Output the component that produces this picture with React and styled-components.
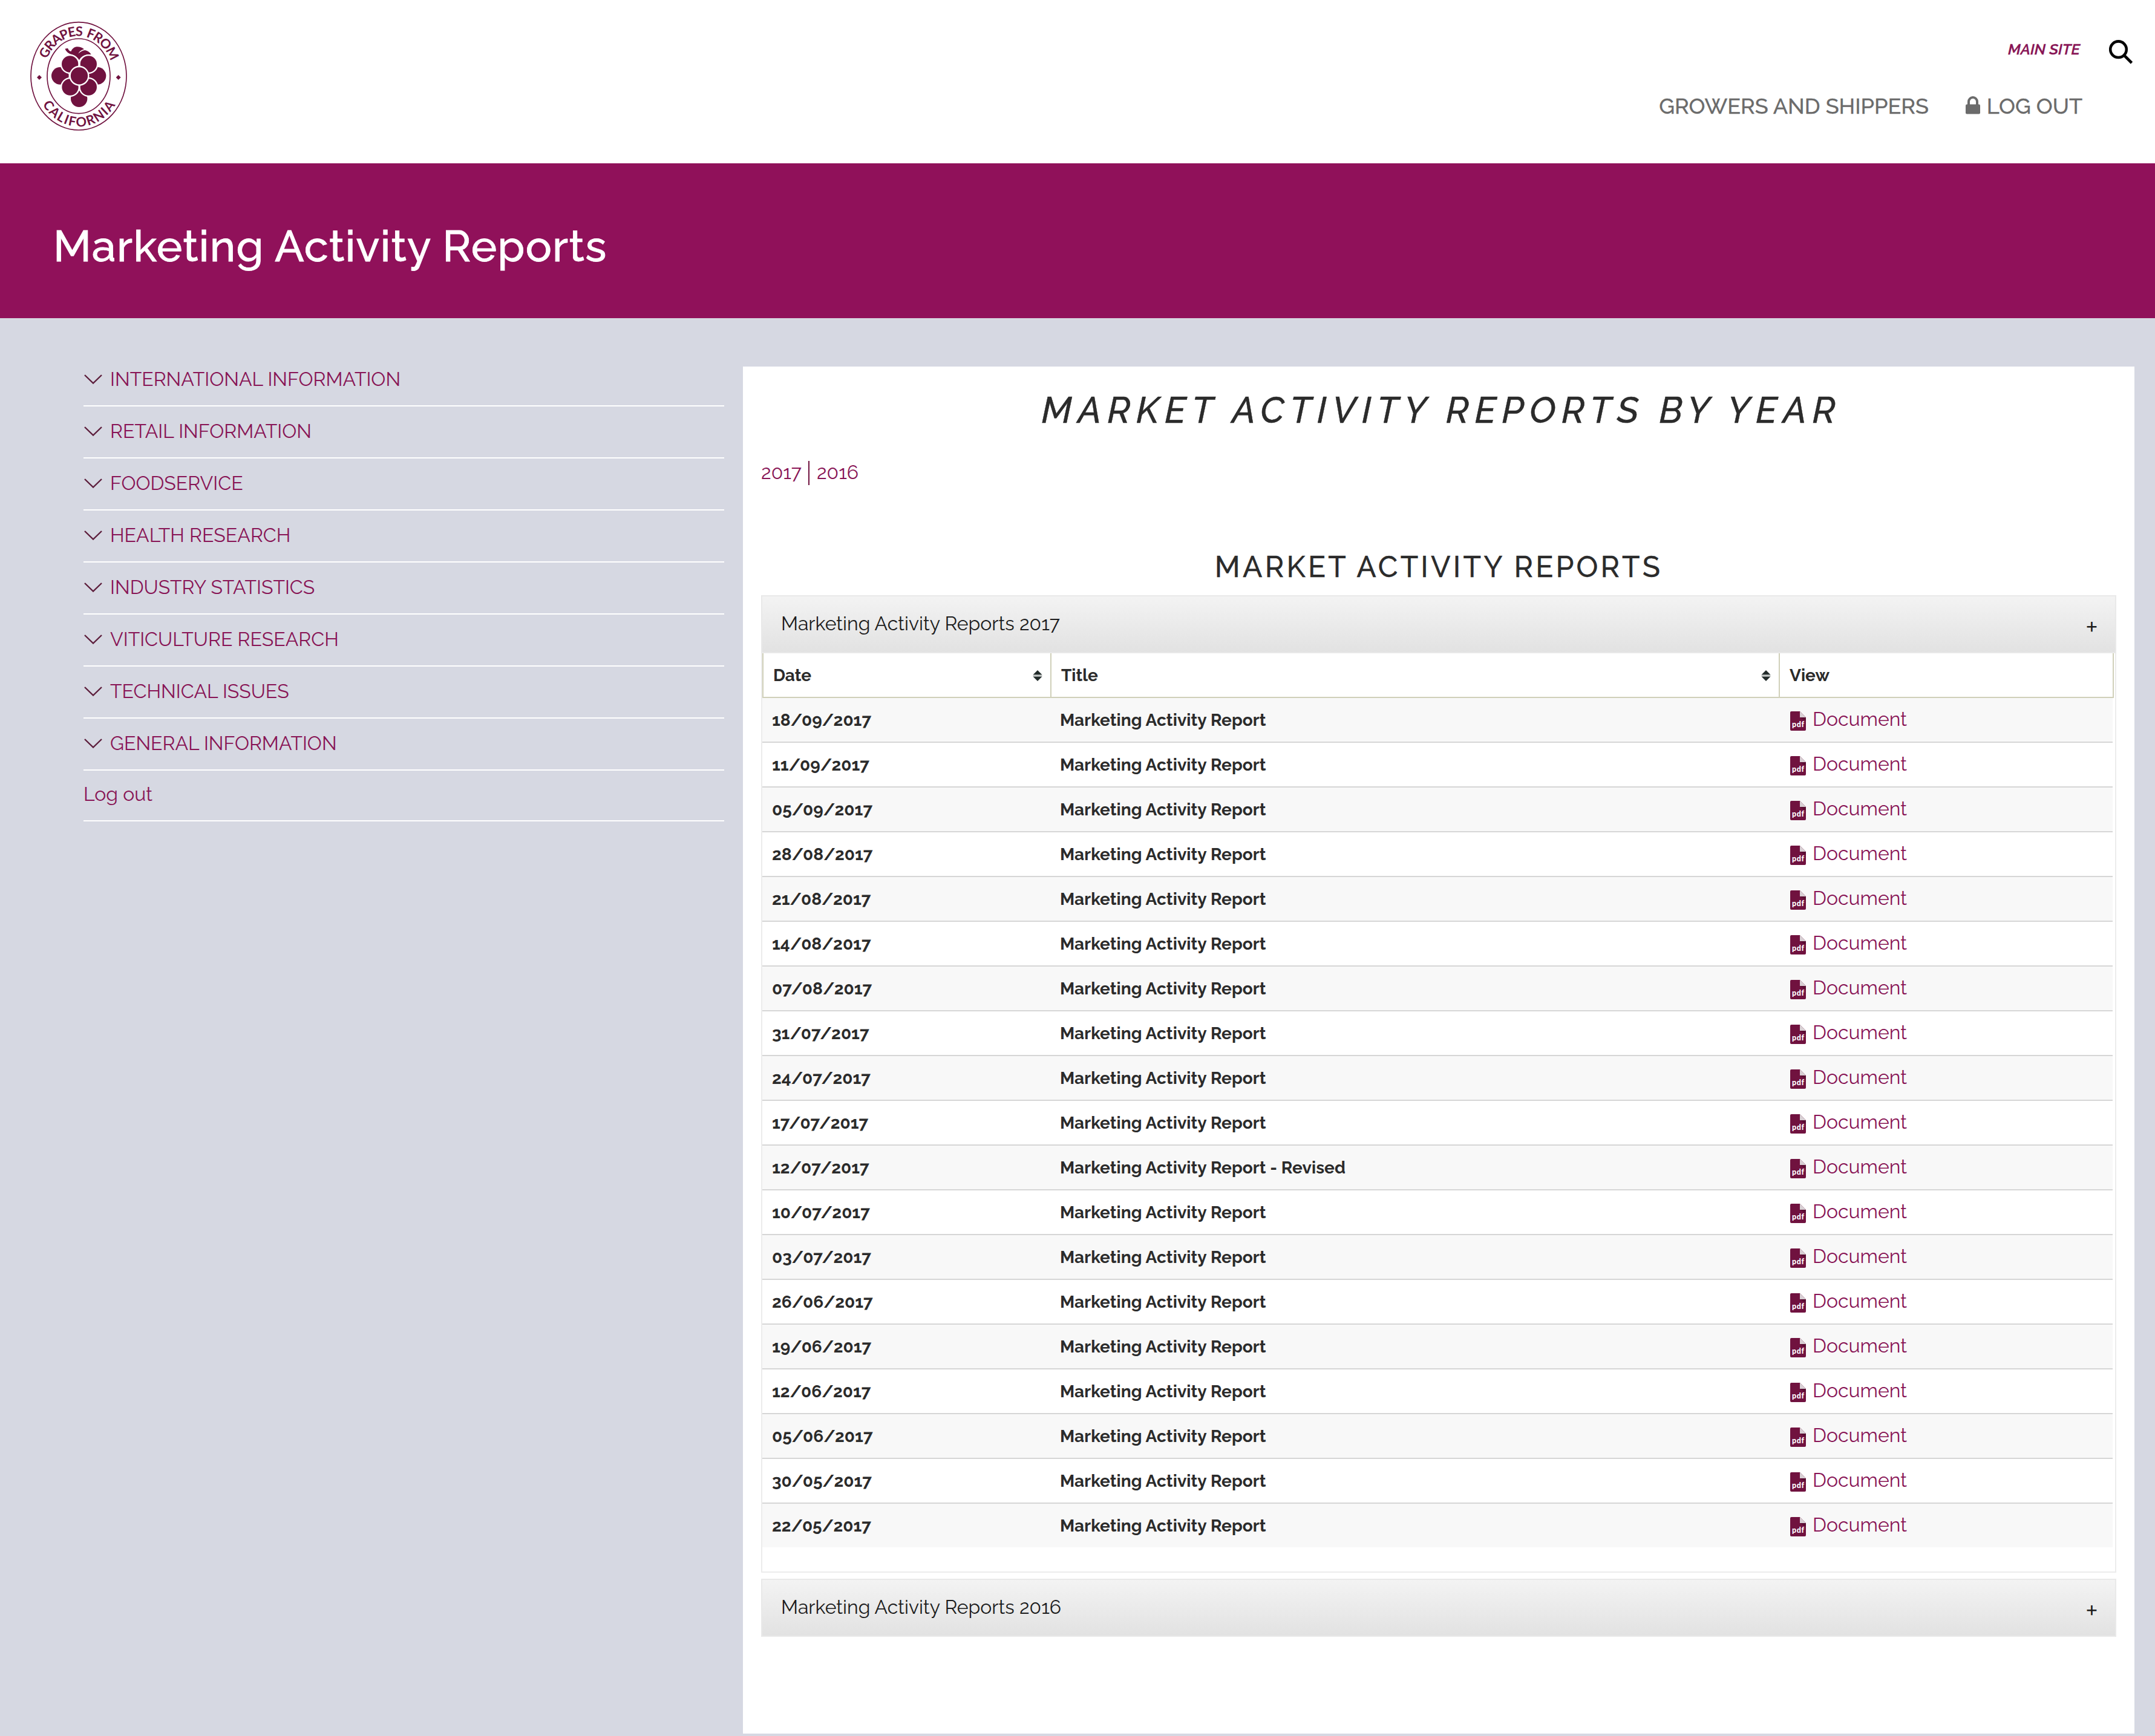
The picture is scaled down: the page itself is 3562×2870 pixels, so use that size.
import React from 'react';
import styled, { createGlobalStyle } from 'styled-components';

const PLUM = '#90115a';
const LINK = '#881455';
const WINE = '#70123f';
const INK = '#2b2b2b';
const SAND = '#d0d0b9';

const GlobalStyle = createGlobalStyle`
  * { box-sizing: border-box; }
  body {
    margin: 0;
    background: #d6d8e2;
    color: ${INK};
    font-family: Raleway, Lato, "Open Sans", sans-serif;
    font-variant-numeric: oldstyle-nums;
    font-size: 32px;
    line-height: 40px;
  }
  svg { display: block; flex: none; }
`;

const Page = styled.div`
  width: 3562px;
  height: 2870px;
  overflow: hidden;
`;

const Header = styled.header`
  display: flex;
  justify-content: space-between;
  height: 270px;
  padding: 10px 36px 0 20px;
  background: #fff;
`;

const HeaderNav = styled.nav`
  display: flex;
  flex-direction: column;
  align-items: flex-end;
  padding-top: 56px;
`;

const TopLinks = styled.div`
  display: flex;
  align-items: center;
  gap: 48px;
  height: 40px;
`;

const MainSite = styled.a`
  padding-bottom: 11px;
  color: ${LINK};
  font-size: 25px;
  font-style: italic;
  font-weight: 600;
  -webkit-text-stroke: 0.3px currentColor;
`;

const MenuLinks = styled.div`
  display: flex;
  align-items: center;
  gap: 61px;
  margin-top: 49px;
  padding-right: 84px;
`;

const MenuLink = styled.a`
  display: flex;
  align-items: center;
  gap: 11px;
  color: #6b6b6b;
  font-size: 36px;
  font-weight: 500;
  -webkit-text-stroke: 0.3px currentColor;
`;

const Banner = styled.div`
  display: flex;
  align-items: center;
  height: 256px;
  padding: 17px 0 0 88px;
  background: ${PLUM};
`;

const BannerTitle = styled.h1`
  margin: 0;
  color: #fff;
  font-size: 72px;
  font-weight: 500;
  line-height: 90px;
  letter-spacing: 1.3px;
  -webkit-text-stroke: 0.8px currentColor;
`;

const Body = styled.div`
  display: flex;
  align-items: flex-start;
`;

const Sidebar = styled.nav`
  width: 1059px;
  margin: 60px 31px 0 138px;
`;

const SideItem = styled.a`
  display: flex;
  align-items: center;
  gap: 13px;
  height: ${(p) => (p.$plain ? 84 : 86)}px;
  padding: 0 0 ${(p) => (p.$plain ? 5 : 3)}px ${(p) => (p.$plain ? 0 : 1)}px;
  border-bottom: 2px solid #fff;
  color: ${LINK};
`;

const Panel = styled.main`
  width: 2300px;
  height: 2260px;
  margin-top: 80px;
  padding: 32px 30px 0;
  background: #fff;
`;

const YearHeading = styled.h2`
  margin: 0;
  padding-left: 9px;
  font-size: 60px;
  font-style: italic;
  font-weight: 500;
  line-height: 80px;
  letter-spacing: 9.75px;
  text-align: center;
  -webkit-text-stroke: 0.5px currentColor;
`;

const YearNav = styled.div`
  display: flex;
  align-items: stretch;
  height: 40px;
  margin-top: 44px;
  color: ${LINK};
`;

const YearLink = styled.a`
  line-height: 37px;
  &:first-child {
    padding-right: 11px;
  }
  & + & {
    padding-left: 12px;
    border-left: 2px solid ${WINE};
  }
`;

const SectionHeading = styled.h3`
  margin: 105px 0 17px;
  font-size: 48px;
  font-weight: 500;
  line-height: 60px;
  letter-spacing: 4.2px;
  text-align: center;
  -webkit-text-stroke: 0.3px currentColor;
`;

const AccordionHead = styled.div`
  display: flex;
  align-items: center;
  justify-content: space-between;
  height: 96px;
  padding: 0 29px 2px 31px;
  border: 2px solid #e9e9e9;
  background: linear-gradient(#f3f3f3, #e2e2e2);
  color: #1c1c1c;
`;

const Toggle = styled.span`
  padding-top: 1px;
  font-family: Lato, sans-serif;
  font-size: 35px;
`;

const AccordionBody = styled.div`
  height: 1520px;
  margin-bottom: 10px;
  border: 2px solid #ececec;
  border-top: 0;
`;

const HeadRow = styled.div`
  display: grid;
  grid-template-columns: 476px 1204px 552px;
  width: 2234px;
  height: 74px;
  border-bottom: 2px solid ${SAND};
  border-left: 2px solid ${SAND};
`;

const HeadCell = styled.div`
  display: flex;
  align-items: center;
  justify-content: space-between;
  padding: 1px 13px 0 16px;
  border-right: 2px solid ${SAND};
  font-size: 28px;
  font-weight: 700;
`;

const Row = styled.div`
  display: grid;
  grid-template-columns: 476px 1204px 552px;
  width: 2232px;
  height: 74px;
  border-bottom: 2px solid #d6d6d6;
  background: #fff;
  &:nth-child(even) { background: #f8f8f8; }
  &:last-child {
    height: 72px;
    border-bottom: 0;
  }
`;

const Cell = styled.div`
  height: 72px;
  padding-left: 16px;
  font-size: 28px;
  font-weight: 700;
  line-height: 73px;
  letter-spacing: ${(p) => (p.$wide ? 0.07 : 0)}px;
`;

const DocLink = styled.a`
  display: flex;
  align-items: center;
  gap: 11px;
  padding-left: 19px;
  color: ${LINK};
`;

const DocLabel = styled.span`
  padding-bottom: 3px;
`;

const IconDrop = styled.span`
  padding-top: ${(p) => p.$by}px;
`;

const Logo = () => (
  <svg width="220" height="230" viewBox="0 0 660 690">
    <defs>
      <path id="arcTop" d="M172 264 A172 197 0 0 1 492 284" />
      <path id="arcBottom" d="M151 488 A219 250 0 0 0 518 480" />
    </defs>
    <g fill="none" stroke={WINE} strokeWidth="5">
      <ellipse cx="330" cy="347.500" rx="237" ry="267.500" />
      <ellipse cx="330" cy="347.500" rx="156" ry="185.500" />
    </g>
    <g fill={WINE} fontFamily="Lato, sans-serif" fontSize="65" fontWeight="700">
      <text textLength="424" lengthAdjust="spacing" wordSpacing="8">
        <textPath href="#arcTop">GRAPES FROM</textPath>
      </text>
      <text textLength="440" lengthAdjust="spacing">
        <textPath href="#arcBottom">CALIFORNIA</textPath>
      </text>
    </g>
    <g fill={WINE}>
      <path d="M135 342l12 12-12 12-12-12zM527 342l12 12-12 12-12-12z" />
      <path d="M262 212L276 209Q282 223 292 225Q300 205 320 202Q342 201 357 214Q336 220 328 236Q344 221 362 219Q382 224 392 240Q345 240 333 268Q318 246 296 240Q272 234 262 212Z" />
      <circle cx="238" cy="346" r="43" />
      <circle cx="423" cy="346" r="43" />
      <circle cx="332" cy="460" r="41" />
    </g>
    <g fill={WINE} stroke="#fff" strokeWidth="7">
      <circle cx="287" cy="288" r="44.500" />
      <circle cx="379" cy="288" r="44.500" />
      <circle cx="288" cy="402" r="44.500" />
      <circle cx="379" cy="402" r="44.500" />
      <circle cx="333" cy="346" r="46" />
    </g>
  </svg>
);

const SearchIcon = () => (
  <svg width="40" height="40" viewBox="0 0 40 40" fill="none" stroke="#060606">
    <circle cx="15.500" cy="15.700" r="13.300" strokeWidth="4.600" />
    <path d="M25 25.500L37.500 38" strokeWidth="4.600" />
  </svg>
);

const LockIcon = () => (
  <svg width="24" height="32" viewBox="0 0 24 32">
    <path d="M5 15V9a7 7 0 0 1 14 0v6" fill="none" stroke="#6b6b6b" strokeWidth="4" />
    <rect y="13.500" width="24" height="16" rx="2" fill="#6b6b6b" />
  </svg>
);

const Chevron = () => (
  <svg width="30" height="16" viewBox="0 0 30 16" fill="none" stroke="#5c1d3b" strokeWidth="2.400">
    <path d="M1 1L15 14.500L29 1" />
  </svg>
);

const SortIcon = () => (
  <svg width="16" height="18" viewBox="0 0 16 18" fill="#222b2a">
    <path d="M8 0L15.500 7.500H.5z" />
    <path d="M8 18L15.500 10.500H.5z" />
    <path d="M.5 8h15v2H.5z" fill="#c4c8c6" />
  </svg>
);

const PdfIcon = () => (
  <svg width="26" height="32" viewBox="0 0 26 32">
    <path d="M2 0H16L26 10V30a2 2 0 0 1-2 2H2a2 2 0 0 1-2-2V2a2 2 0 0 1 2-2z" fill={WINE} />
    <path d="M16 10H26V16z" fill="#5a0d32" />
    <path d="M16 0L26 10H16z" fill="#d8d0d4" />
    <text x="13" y="26" textAnchor="middle" textLength="20" fontFamily="Lato, sans-serif" fontSize="12.500" fontWeight="900" fill="#fff">
      pdf
    </text>
  </svg>
);

const sections = [
  'INTERNATIONAL INFORMATION',
  'RETAIL INFORMATION',
  'FOODSERVICE',
  'HEALTH RESEARCH',
  'INDUSTRY STATISTICS',
  'VITICULTURE RESEARCH',
  'TECHNICAL ISSUES',
  'GENERAL INFORMATION',
];

const reports = [
  '18/09/2017', '11/09/2017', '05/09/2017', '28/08/2017', '21/08/2017',
  '14/08/2017', '07/08/2017', '31/07/2017', '24/07/2017', '17/07/2017',
  '12/07/2017', '10/07/2017', '03/07/2017', '26/06/2017', '19/06/2017',
  '12/06/2017', '05/06/2017', '30/05/2017', '22/05/2017',
].map((date) => ({
  date,
  title: date === '12/07/2017' ? 'Marketing Activity Report - Revised' : 'Marketing Activity Report',
}));

export default function App() {
  return (
    <Page>
      <GlobalStyle />
      <Header>
        <Logo />
        <HeaderNav>
          <TopLinks>
            <MainSite>MAIN SITE</MainSite>
            <SearchIcon />
          </TopLinks>
          <MenuLinks>
            <MenuLink>GROWERS AND SHIPPERS</MenuLink>
            <MenuLink>
              <LockIcon />
              LOG OUT
            </MenuLink>
          </MenuLinks>
        </HeaderNav>
      </Header>
      <Banner>
        <BannerTitle>Marketing Activity Reports</BannerTitle>
      </Banner>
      <Body>
        <Sidebar>
          {sections.map((name) => (
            <SideItem key={name}>
              <IconDrop $by={1}><Chevron /></IconDrop>
              {name}
            </SideItem>
          ))}
          <SideItem $plain>Log out</SideItem>
        </Sidebar>
        <Panel>
          <YearHeading>MARKET ACTIVITY REPORTS BY YEAR</YearHeading>
          <YearNav>
            <YearLink>2017</YearLink>
            <YearLink>2016</YearLink>
          </YearNav>
          <SectionHeading>MARKET ACTIVITY REPORTS</SectionHeading>
          <AccordionHead>
            Marketing Activity Reports 2017
            <Toggle>+</Toggle>
          </AccordionHead>
          <AccordionBody>
            <HeadRow>
              <HeadCell>Date<IconDrop $by={1}><SortIcon /></IconDrop></HeadCell>
              <HeadCell>Title<IconDrop $by={1}><SortIcon /></IconDrop></HeadCell>
              <HeadCell>View</HeadCell>
            </HeadRow>
            {reports.map(({ date, title }) => (
              <Row key={date}>
                <Cell>{date}</Cell>
                <Cell $wide>{title}</Cell>
                <DocLink>
                  <IconDrop $by={4}><PdfIcon /></IconDrop>
                  <DocLabel>Document</DocLabel>
                </DocLink>
              </Row>
            ))}
          </AccordionBody>
          <AccordionHead>
            Marketing Activity Reports 2016
            <Toggle>+</Toggle>
          </AccordionHead>
        </Panel>
      </Body>
    </Page>
  );
}
